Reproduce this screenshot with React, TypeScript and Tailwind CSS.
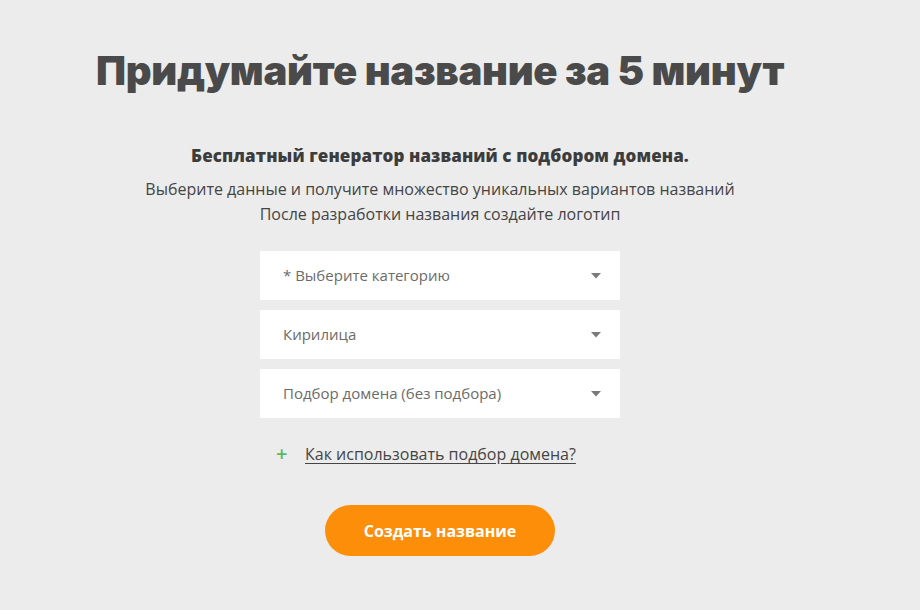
import React from "react";

function Select({ label }: { label: string }) {
  return (
    <div className="flex h-[49px] w-[360px] items-center justify-between bg-white pl-[23px] pr-[19px] text-[15px] text-[#6b6b6b]">
      <span>{label}</span>
      <svg width="10" height="6" viewBox="0 0 10 6">
        <path d="M0 0 L10 0 L5 5.5 Z" fill="#7a7a7a" />
      </svg>
    </div>
  );
}

export default function App() {
  return (
    <div className="min-h-[610px] w-full bg-[#ececec]" style={{ fontFamily: '"Open Sans", "Noto Sans", sans-serif' }}>
      <div className="flex w-[880px] flex-col items-center pt-[42px]">
        <h1
          className="text-[40px] leading-[58px] tracking-[-0.3px] text-[#4a4a4a]"
          style={{ fontFamily: 'Inter, "Noto Sans", sans-serif', fontWeight: 900 }}
        >
          Придумайте название за 5 минут
        </h1>
        <p className="mt-[44px] text-[17px] font-extrabold leading-[24px] tracking-[0.1px] text-[#3c3c3c]">
          Бесплатный генератор названий с подбором домена.
        </p>
        <p className="mt-[9px] text-center text-[16px] leading-[25px] text-[#454545]">
          Выберите данные и получите множество уникальных вариантов названий
          <br />
          После разработки названия создайте логотип
        </p>
        <div className="mt-[24px] flex flex-col gap-[10px]">
          <Select label="* Выберите категорию" />
          <Select label="Кирилица" />
          <Select label="Подбор домена (без подбора)" />
        </div>
        <div className="mt-[24px] flex w-[360px] items-center text-[16px] leading-[24px] text-[#454545]">
          <span className="ml-[16px] w-[29px] text-[20px] font-semibold leading-[24px] text-[#5cb85c]">+</span>
          <a href="#" className="underline underline-offset-[3px]">Как использовать подбор домена?</a>
        </div>
        <button className="mt-[39px] h-[51px] w-[230px] rounded-full bg-[#fd8e09] text-[16px] font-bold text-white">
          Создать название
        </button>
      </div>
    </div>
  );
}
